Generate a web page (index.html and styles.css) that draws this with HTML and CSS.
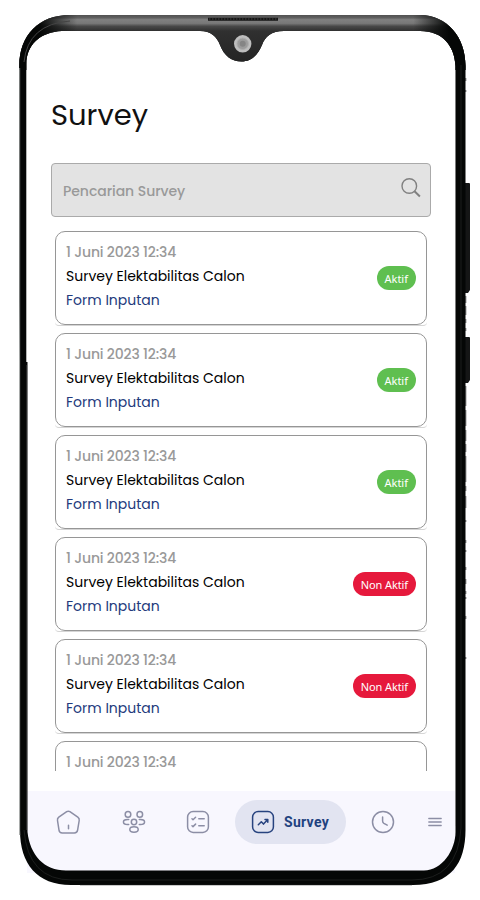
FILE: index.html
```
<!DOCTYPE html>
<html lang="id">
<head>
<meta charset="utf-8">
<title>Survey</title>
<link rel="stylesheet" href="styles.css">
</head>
<body>
<main class="screen">
  <h1><span>Survey</span></h1>
  <div class="search">
    <span>Pencarian Survey</span>
    <svg width="22" height="22" viewBox="0 0 22 22" fill="none" stroke="#808080"><circle cx="9.3" cy="9" r="7.3" stroke-width="1.4"/><path d="M14.5 14.2l5.4 5.3" stroke-width="2"/></svg>
  </div>
  <section class="list">
    <div class="item"><article class="card"><div><p class="date">1 Juni 2023 12:34</p><p class="name">Survey Elektabilitas Calon</p><p class="form">Form Inputan</p></div><span class="badge on">Aktif</span></article></div>
    <div class="item"><article class="card"><div><p class="date">1 Juni 2023 12:34</p><p class="name">Survey Elektabilitas Calon</p><p class="form">Form Inputan</p></div><span class="badge on">Aktif</span></article></div>
    <div class="item"><article class="card"><div><p class="date">1 Juni 2023 12:34</p><p class="name">Survey Elektabilitas Calon</p><p class="form">Form Inputan</p></div><span class="badge on">Aktif</span></article></div>
    <div class="item"><article class="card"><div><p class="date">1 Juni 2023 12:34</p><p class="name">Survey Elektabilitas Calon</p><p class="form">Form Inputan</p></div><span class="badge off">Non Aktif</span></article></div>
    <div class="item"><article class="card"><div><p class="date">1 Juni 2023 12:34</p><p class="name">Survey Elektabilitas Calon</p><p class="form">Form Inputan</p></div><span class="badge off">Non Aktif</span></article></div>
    <div class="item"><article class="card"><div><p class="date">1 Juni 2023 12:34</p></div></article></div>
  </section>
  <nav>
    <svg class="home" width="26" height="26" viewBox="0 0 26 26"><path d="M11.7 2.700 3.800 8.200Q2.100 9.500 2.500 11.500L4 21.200Q4.400 24 7.200 24H19.400Q22.200 24 22.600 21.200L24.200 11.500Q24.600 9.500 22.800 8.200L14.900 2.700Q13.300 1.700 11.700 2.700ZM13.500 16.200v3.500"/></svg>
    <svg class="people" width="26" height="26" viewBox="0 0 26 26"><circle cx="7" cy="5.400" r="2.800"/><circle cx="18.800" cy="5.400" r="2.800"/><circle cx="13" cy="13" r="2.700"/><ellipse cx="13" cy="20.500" rx="4.200" ry="2.700"/><path d="M7.700 10.400H6.500C1.100 10.400 1.100 15.500 6.500 15.500H7.700M18.300 10.400H19.500C24.900 10.400 24.900 15.500 19.500 15.500H18.300"/></svg>
    <svg class="tasks" width="26" height="26" viewBox="0 0 26 26"><rect x="2.600" y="2.600" width="20.800" height="20.800" rx="5.500"/><path d="M7 9.800l1 .9 2.600-2.500M7 16.700l1 .9 2.600-2.500M13.800 9.800h5.400M13.800 16.700h5.400"/></svg>
    <div class="active">
      <svg width="26" height="26" viewBox="0 0 26 26"><rect x="2.600" y="2.600" width="20.800" height="20.800" rx="5.500"/><path d="M8.300 15.700l3-3 2.200 2.400 4-4.300M15 10.400h2.800v2.800"/></svg>
      <span>Survey</span>
    </div>
    <svg class="clock" width="26" height="26" viewBox="0 0 26 26"><circle cx="13" cy="13" r="10.500"/><path d="M12.600 8v4q0 1.500 1.300 2.300l3.300 1.900"/></svg>
    <svg class="menu" width="14" height="10" viewBox="0 0 14 10"><path d="M.8 1.500h12.400M.8 5h12.400M.8 8.500h12.400"/></svg>
  </nav>
</main>
<svg class="phone" width="480" height="900" viewBox="0 0 480 900" aria-hidden="true">
  <defs>
    <linearGradient id="top" gradientUnits="userSpaceOnUse" x1="0" y1="15" x2="0" y2="62">
      <stop offset="0" stop-color="#515151"/><stop offset=".06" stop-color="#606060"/><stop offset=".1" stop-color="#808080"/><stop offset=".18" stop-color="#777"/><stop offset=".24" stop-color="#484848"/><stop offset=".34" stop-color="#303030"/><stop offset="1" stop-color="#242424"/>
    </linearGradient>
    <linearGradient id="fade" gradientUnits="userSpaceOnUse" x1="19" y1="0" x2="467" y2="0">
      <stop offset="0" stop-color="#050706"/><stop offset=".045" stop-color="#050706"/><stop offset=".13" stop-color="#050706" stop-opacity="0"/><stop offset=".88" stop-color="#050706" stop-opacity="0"/><stop offset=".96" stop-color="#050706"/><stop offset="1" stop-color="#050706"/>
    </linearGradient>
    <clipPath id="upper"><path d="M0 0H480V70H0z"/></clipPath>
    <path id="bezel" fill-rule="evenodd" d="M70 15H420C447 15 465.500 37 465.500 66V830C465.500 863 451 885 413 885H71C37 885 20 864 20 830V362L19.300 300V66C19.300 35 39 15 70 15ZM62 31C40 32 26.300 45 26.300 64V362H27.500V832C30 855 44 870.500 66 870.500H424C442 870.500 455.500 850 455.500 832V66C454.500 46 443 31 420 31H284C271 31 265 37 262 45C257 57 250 61.500 241.500 61.500C232 61.500 224 56 220 45C217 37 211 31 200 31Z"/>
  </defs>
  <path d="M465 183h4q1 0 1 1v106l-2 3h-3zM465 337h4q1 0 1 1v42l-2 3h-3z" fill="#151616"/>
  <path d="M465.800 78v3M465.800 90v2M465.800 296v7M465.800 306v9M465.800 319v4M465.800 328v3M465.800 386v20M465.800 410v16M465.800 430v11M465.800 444v8M465.800 456v26M465.800 486v5M465.800 496v12M465.800 520v2M465.800 540v3M465.800 550v2M465.800 567v3M465.800 579v5M465.800 591v3M465.800 597v2M465.800 616v3M465.800 657v2" stroke="#333" stroke-width=".8"/>
  <use href="#bezel" fill="#050706"/>
  <use href="#bezel" fill="url(#top)" clip-path="url(#upper)"/>
  <use href="#bezel" fill="url(#fade)" clip-path="url(#upper)"/>
  <path d="M19.700 68V835" stroke="#8a8d8c" stroke-width=".9"/>
  <path d="M24 62Q28 24 70 21" stroke="#444" fill="none" stroke-width="1"/>
  <path d="M27 365V830M455.500 70V826" stroke="#777" stroke-width=".6"/>
  <path d="M461 65V828Q458 880 412 880H72Q28 880 24 830" stroke="#1c1e1d" fill="none" stroke-width="1"/>
  <path d="M80 885.400H412" stroke="#999" stroke-width=".6"/>
  <path d="M208 19.300h70" stroke="#151515" stroke-width="3"/>
  <path d="M209 19h68" stroke="#444" stroke-width="1" stroke-dasharray="1.500 1.500"/>
  <circle cx="242.700" cy="43.800" r="8.700" fill="#bebebe"/><circle cx="242.700" cy="43.800" r="5.700" fill="#9c9c9c" stroke="#adadad"/><circle cx="242.700" cy="43.800" r="3" fill="#858585"/>
</svg>
</body>
</html>
```
FILE: styles.css
```
* { box-sizing: border-box; }
body { margin: 0; width: 480px; height: 900px; background: #fff; overflow: hidden; font-family: Poppins, Inter, "Noto Sans", sans-serif; }
.screen { margin: 0 24px 0 27px; height: 873px; display: flex; flex-direction: column; }
.phone { position: absolute; left: 0; top: 0; pointer-events: none; }
h1, p { margin: 0; font-weight: 400; }
h1 { margin: 91px 0 0 24px; height: 72px; font-size: 29px; line-height: 48px; color: #111; }
.search { margin-left: 24px; width: 380px; height: 54px; flex: none; display: flex; justify-content: space-between; align-items: center; padding: 2px 8px 0 11px; background: #e3e3e3; border: 1px solid #aaa; border-radius: 4px; color: #999; font-size: 14px; font-weight: 500; letter-spacing: -.05px; }
.search svg { margin-top: -6px; }
.list { margin: 14px 0 0 28px; width: 372px; height: 540px; flex: none; overflow: hidden; }
.item { height: 95px; margin-bottom: 7px; border-bottom: 1px solid #d5d5d5; border-radius: 4px; }
.card { height: 94px; display: flex; justify-content: space-between; align-items: flex-start; padding: 8px 10px; border: 1px solid #969696; border-radius: 10px; }
.card p { font-size: 14px; line-height: 24px; white-space: nowrap; }
.card .date { color: #999; font-weight: 500; letter-spacing: -.16px; }
.card .name { color: #000; }
.card .form { color: #233a7c; }
.badge { height: 24px; margin-top: 26px; padding: 1px 8px 0; line-height: 24px; border-radius: 12px; color: #fff; font-family: "Noto Sans", sans-serif; font-size: 11px; white-space: nowrap; }
.on { background: #5fbf50; }
.off { background: #e6193c; letter-spacing: -.1px; }
nav { margin-top: 20px; height: 82px; width: 428px; display: flex; align-items: flex-start; padding: 9px 0 0 28px; background: #f8f7fe; }
nav svg { flex: none; fill: none; stroke: #8c8ea5; stroke-width: 1.5; stroke-linecap: round; stroke-linejoin: round; }
nav > svg { margin-top: 9px; }
.people { margin-left: 39.500px; }
.tasks { margin-left: 38.500px; }
.active { margin-left: 24px; width: 111px; height: 44px; border-radius: 22px; background: #e2e4f1; display: flex; align-items: center; padding-left: 15px; color: #1f427f; font: 700 14px Roboto, sans-serif; letter-spacing: .3px; }
.active svg { stroke: #27437f; }
.active span { margin: -1px 0 0 8px; }
.clock { margin-left: 23.500px; }
nav .menu { margin: 17px 0 0 32px; stroke-width: 1.300; }
```
